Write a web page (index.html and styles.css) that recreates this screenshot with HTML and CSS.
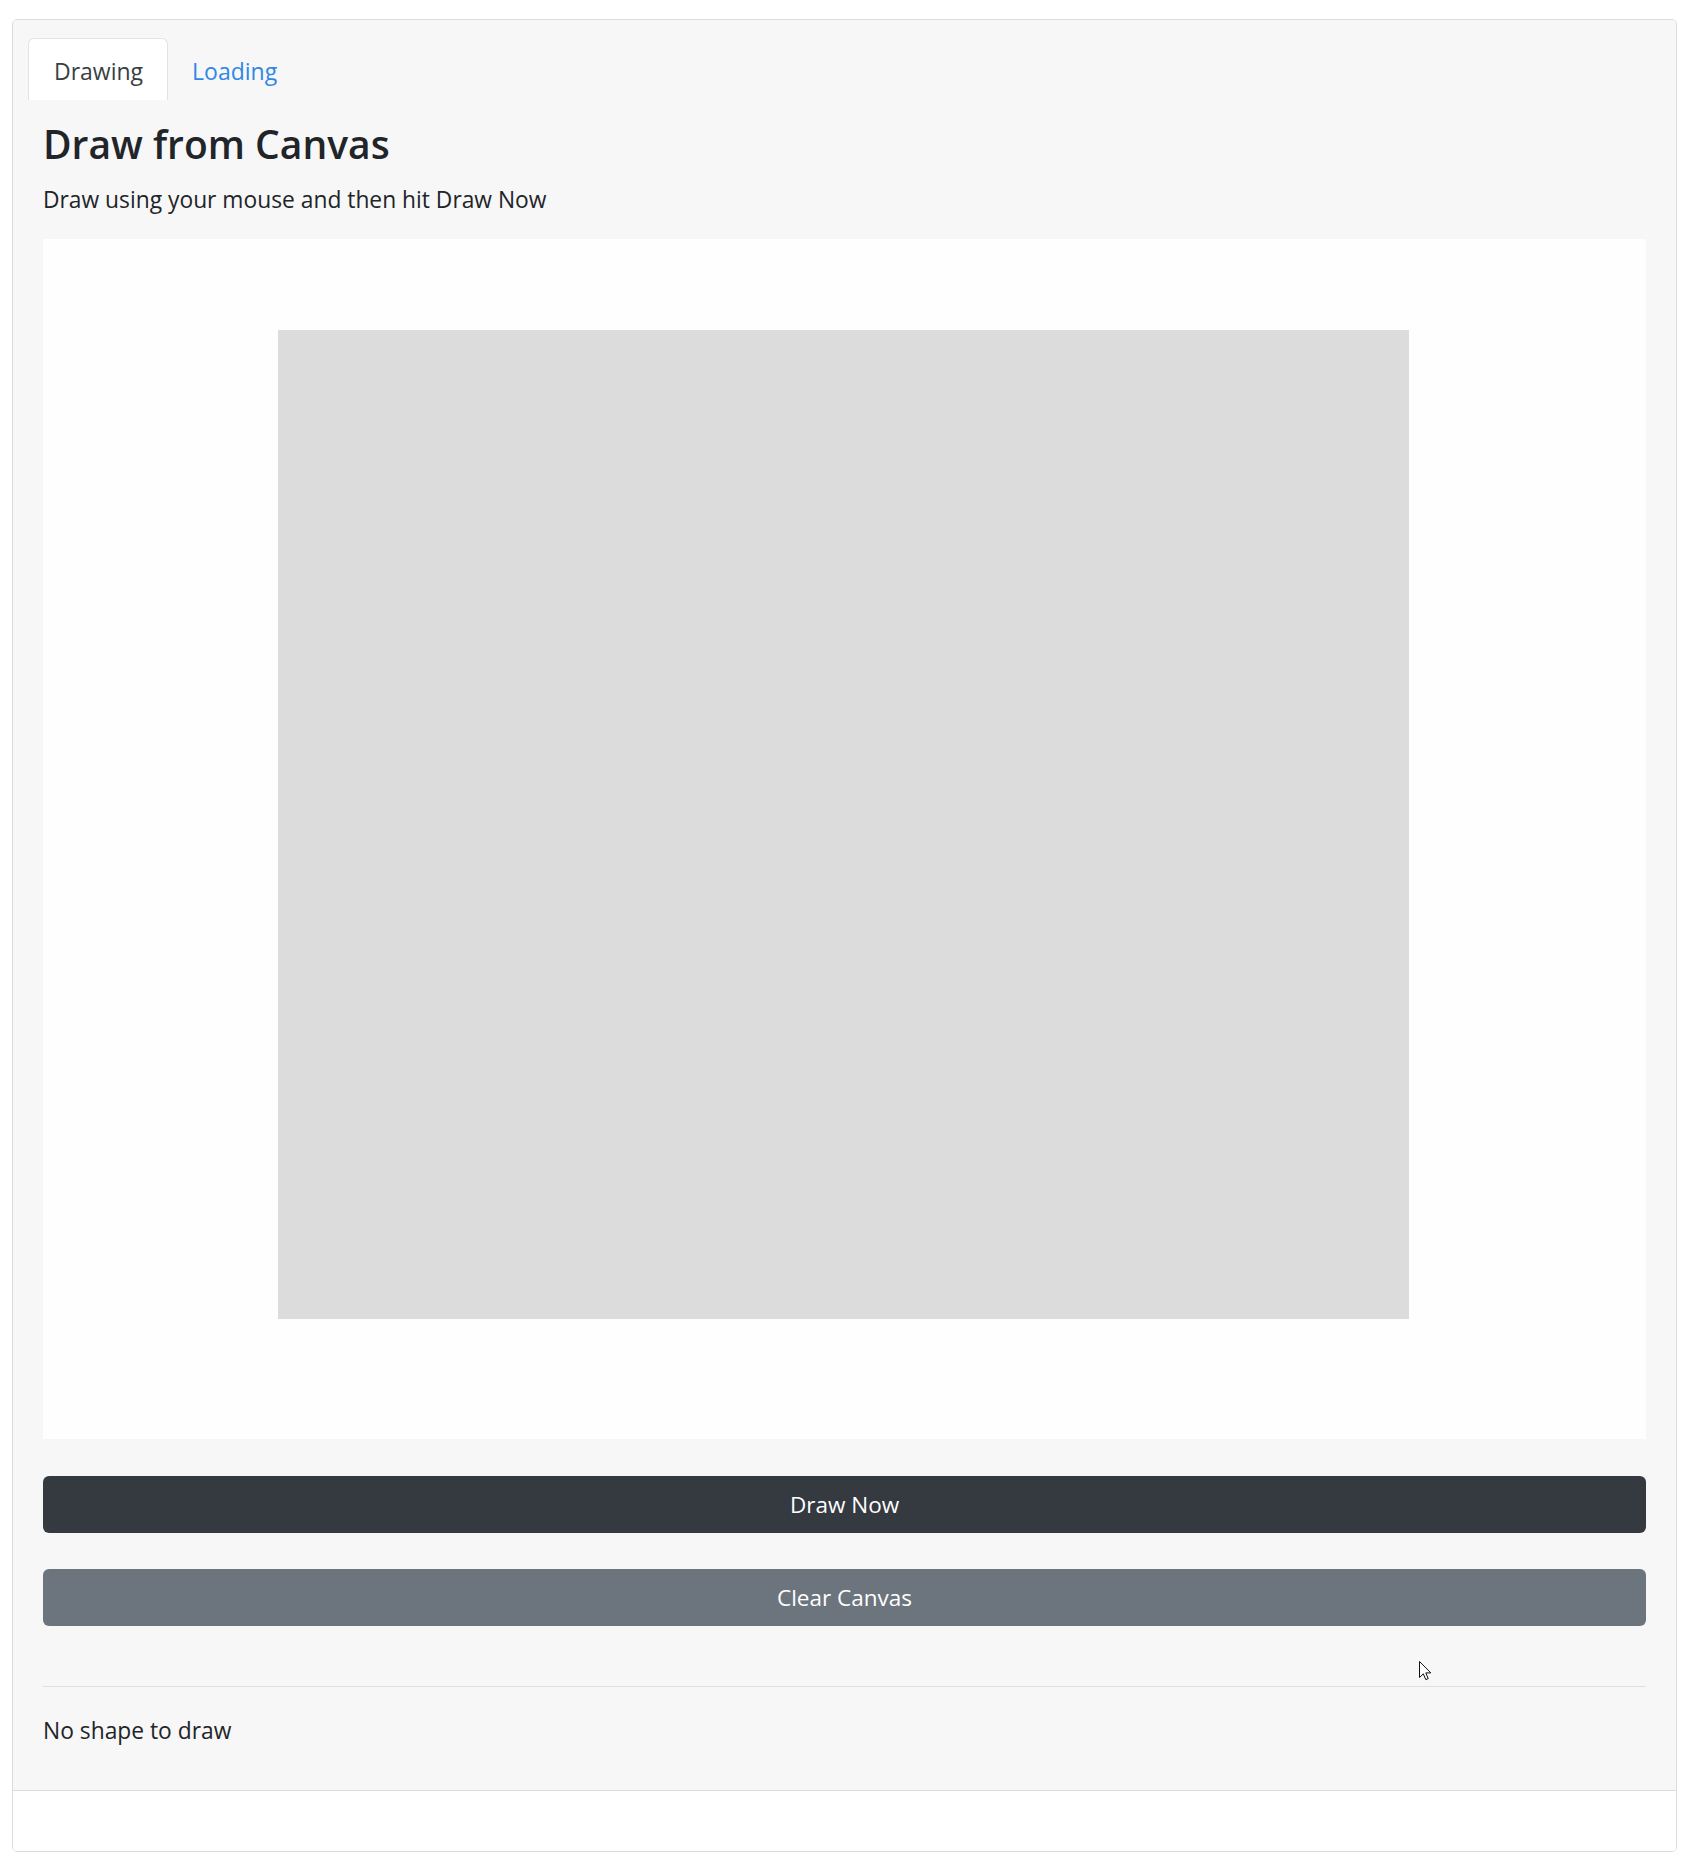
FILE: index.html
```html
<!DOCTYPE html>
<html lang="en">
<head>
<meta charset="utf-8">
<title>Draw from Canvas</title>
<link rel="stylesheet" href="styles.css">
</head>
<body>
<div class="page">
  <div class="card">
    <div class="card-main">
      <ul class="tabs">
        <li class="tab active">Drawing</li>
        <li class="tab link">Loading</li>
      </ul>
      <h1 class="title">Draw from Canvas</h1>
      <p class="lead">Draw using your mouse and then hit Draw Now</p>
      <div class="canvas-wrap">
        <div class="canvas"></div>
      </div>
      <button class="btn btn-dark">Draw Now</button>
      <button class="btn btn-secondary">Clear Canvas</button>
      <hr class="divider">
      <p class="status">No shape to draw</p>
    </div>
    <div class="card-footer"></div>
  </div>
  <svg class="cursor" width="13" height="20" viewBox="0 0 13 20" aria-hidden="true">
    <path d="M0.5 0.5 L0.5 16.5 L4.3 12.8 L6.8 18.6 L9.2 17.6 L6.8 11.9 L11.8 11.9 Z" fill="#fff" stroke="#111" stroke-width="1" stroke-linejoin="miter"/>
  </svg>
</div>
</body>
</html>
```

FILE: styles.css
```css
html, body {
  margin: 0;
  padding: 0;
  background: #ffffff;
}

body {
  font-family: "Open Sans", "Noto Sans", "Liberation Sans", sans-serif;
  color: #212529;
}

.page {
  position: relative;
  padding: 19px 18px 16px 12px;
}

.card {
  border: 1px solid #dcdcdc;
  border-radius: 5px;
  background: #ffffff;
  overflow: hidden;
}

.card-main {
  background: #f7f7f7;
  padding: 18px 30px 41px;
}

.tabs {
  list-style: none;
  display: flex;
  margin: 0 -15px;
  padding: 0;
}

.tab {
  font-size: 23px;
  line-height: 36px;
  padding: 14px 24px 11px;
  border: 1px solid transparent;
  border-bottom: 0;
  border-radius: 6px 6px 0 0;
}

.tab.active {
  background: #ffffff;
  border-color: #e0e3e7;
  color: #3a3f44;
  padding-left: 25px;
  padding-right: 24px;
}

.tab.link {
  color: #2f87e6;
  padding-left: 23px;
}

.title {
  font-size: 39px;
  font-weight: 600;
  line-height: 48px;
  margin: 20px 0 0;
  color: #212529;
}

.lead {
  font-size: 22.8px;
  line-height: 36px;
  margin: 14px 0 21px;
  color: #212529;
}

.canvas-wrap {
  background: #fefefe;
  height: 1200px;
  box-sizing: border-box;
  padding-top: 91px;
  padding-right: 2px;
  display: flex;
  justify-content: center;
  align-items: flex-start;
}

.canvas {
  width: 1131px;
  height: 989px;
  background: #dcdcdc;
}

.btn {
  display: block;
  width: 100%;
  box-sizing: border-box;
  height: 57px;
  margin-top: 37px;
  border: 1px solid transparent;
  border-radius: 6px;
  font-family: inherit;
  font-size: 22.5px;
  line-height: 36px;
  padding: 9px 18px;
  color: #ffffff;
  text-align: center;
}

.btn-dark {
  background: #343a40;
}

.btn-secondary {
  background: #6c757d;
  margin-top: 36px;
}

.divider {
  border: 0;
  border-top: 1px solid #dfdfdf;
  margin: 60px 0 0;
  height: 0;
}

.status {
  font-size: 22.8px;
  line-height: 36px;
  margin: 26px 0 0;
  color: #212529;
}

.card-footer {
  border-top: 1px solid #dcdcdc;
  height: 60px;
  background: #ffffff;
}

.cursor {
  position: absolute;
  left: 1419px;
  top: 1661px;
}
```
